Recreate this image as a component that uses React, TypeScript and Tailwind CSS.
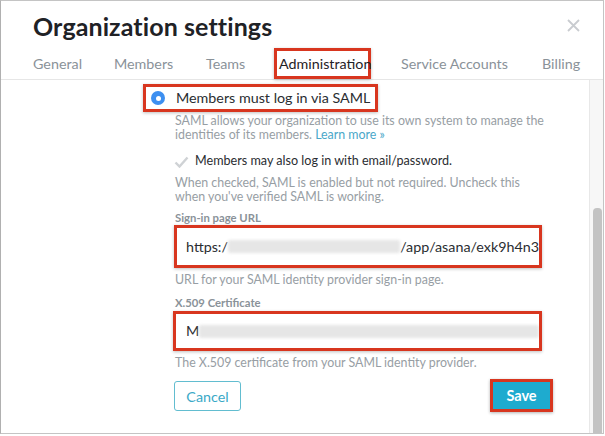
import React from "react";

const Blur = ({ w }: { w: number }) => (
  <span
    className="inline-block h-[13px] bg-[#e6e6e6] blur-[1.5px] rounded-[2px] align-middle"
    style={{ width: w }}
  />
);

export default function App() {
  return (
    <div className="w-[605px] h-[436px] bg-white font-['Lato',sans-serif] overflow-hidden">
      <div className="w-[604px] h-[434px] border border-[#c4c4c4] border-l-[#b0b0b0] flex flex-col">
        {/* header */}
        <div className="flex items-start justify-between pl-[32px] pr-[23px] pt-[10px] h-[47px]">
          <h1 className="text-[25px] leading-[30px] font-bold text-[#1f2226] tracking-[0.1px] whitespace-nowrap">
            Organization settings
          </h1>
          <svg width="13" height="13" viewBox="0 0 13 13" className="mt-[8px]">
            <path d="M1 1 L12 12 M12 1 L1 12" stroke="#c9ccd0" strokeWidth="1.8" />
          </svg>
        </div>
        {/* tabs */}
        <div className="flex items-center pl-[32px] h-[32px] border-b border-[#e6e6e6] text-[14.3px] text-[#8a9299] whitespace-nowrap">
          <span className="w-[81px]">General</span>
          <span className="w-[92px]">Members</span>
          <span className="w-[73px]">Teams</span>
          <span className="w-[122px]">
            <span className="-ml-[5px] w-[97px] h-[31px] flex items-center pl-[2px] border-[3px] border-[#d8361f] text-[#1f2226] shadow-[0_1px_3px_rgba(0,0,0,0.25)]">
              Administration
            </span>
          </span>
          <span className="w-[141px]">Service Accounts</span>
          <span>Billing</span>
        </div>
        {/* body */}
        <div className="flex flex-1 min-h-0">
          <div className="flex-1 pl-[142px] pt-[4px]">
            <div className="w-[235px] h-[28px] border-[3px] border-[#d8361f] shadow-[0_1px_3px_rgba(0,0,0,0.25)] flex items-center pl-[5px] whitespace-nowrap">
              <span className="shrink-0 w-[14px] h-[14px] rounded-full bg-[#3d8ff0] flex items-center justify-center">
                <span className="w-[5px] h-[5px] rounded-full bg-white" />
              </span>
              <span className="ml-[11px] text-[14.3px] text-[#2a2d31] leading-none">
                Members must log in via SAML
              </span>
            </div>
            <p className="ml-[32px] mt-[2px] text-[12.4px] leading-[14px] text-[#979ea4] whitespace-nowrap">
              SAML allows your organization to use its own system to manage the
              <br />
              identities of its members.{" "}
              <span className="text-[#4aa7c9]">Learn more »</span>
            </p>
            <div className="ml-[31px] mt-[13px] h-[13px] flex items-center whitespace-nowrap">
              <svg width="15" height="12" viewBox="0 0 15 12">
                <path d="M1.5 6.5 L5.5 10.5 L13.5 1.5" fill="none" stroke="#cfd2d5" strokeWidth="2.4" />
              </svg>
              <span className="ml-[6px] text-[12.6px] text-[#2a2d31] leading-none">
                Members may also log in with email/password.
              </span>
            </div>
            <p className="ml-[32px] mt-[8px] text-[12.4px] leading-[14px] text-[#979ea4] whitespace-nowrap">
              When checked, SAML is enabled but not required. Uncheck this
              <br />
              when you've verified SAML is working.
            </p>
            <div className="ml-[32px] mt-[8px] text-[11.3px] font-bold leading-none text-[#8a9299]">
              Sign-in page URL
            </div>
            <div className="ml-[31px] mt-[2px] w-[368px] h-[43px] border-[3px] border-[#d8361f] shadow-[0_1px_3px_rgba(0,0,0,0.25)] flex items-center pl-[9px] overflow-hidden whitespace-nowrap text-[14.3px] text-[#2a2d31]">
              <span>https:/</span>
              <Blur w={180} />
              <span>/app/asana/exk9h4n3</span>
            </div>
            <div className="ml-[32px] mt-[6px] text-[12.4px] leading-none text-[#979ea4]">
              URL for your SAML identity provider sign-in page.
            </div>
            <div className="ml-[32px] mt-[10px] text-[11.3px] font-bold leading-none text-[#8a9299]">
              X.509 Certificate
            </div>
            <div className="ml-[30px] mt-[3px] w-[369px] h-[40px] border-[3px] border-[#d8361f] shadow-[0_1px_3px_rgba(0,0,0,0.25)] flex items-center pl-[10px] overflow-hidden whitespace-nowrap text-[14.3px] text-[#2a2d31]">
              <span>M</span>
              <Blur w={340} />
            </div>
            <div className="ml-[32px] mt-[6px] text-[12.4px] leading-none text-[#979ea4]">
              The X.509 certificate from your SAML identity provider.
            </div>
            <div className="ml-[31px] mt-[10px] w-[379px] flex items-center justify-between">
              <button className="w-[67px] h-[30px] mt-[1px] border-[1.5px] border-[#62bdd0] rounded-[3px] text-[#3aa9c7] text-[14.3px]">
                Cancel
              </button>
              <button className="w-[63px] h-[33px] border-[3px] border-[#d8361f] bg-[#1eabcf] shadow-[0_1px_3px_rgba(0,0,0,0.3)] text-white font-bold text-[14.5px]">
                Save
              </button>
            </div>
          </div>
          {/* scrollbar */}
          <div className="w-[14px] border-l border-[#e8e8e8] bg-[#f7f7f7] pt-[128px] pl-[3px]">
            <div className="w-[9px] h-full bg-[#c3c3c3] rounded-t-[4px]" />
          </div>
        </div>
      </div>
    </div>
  );
}
